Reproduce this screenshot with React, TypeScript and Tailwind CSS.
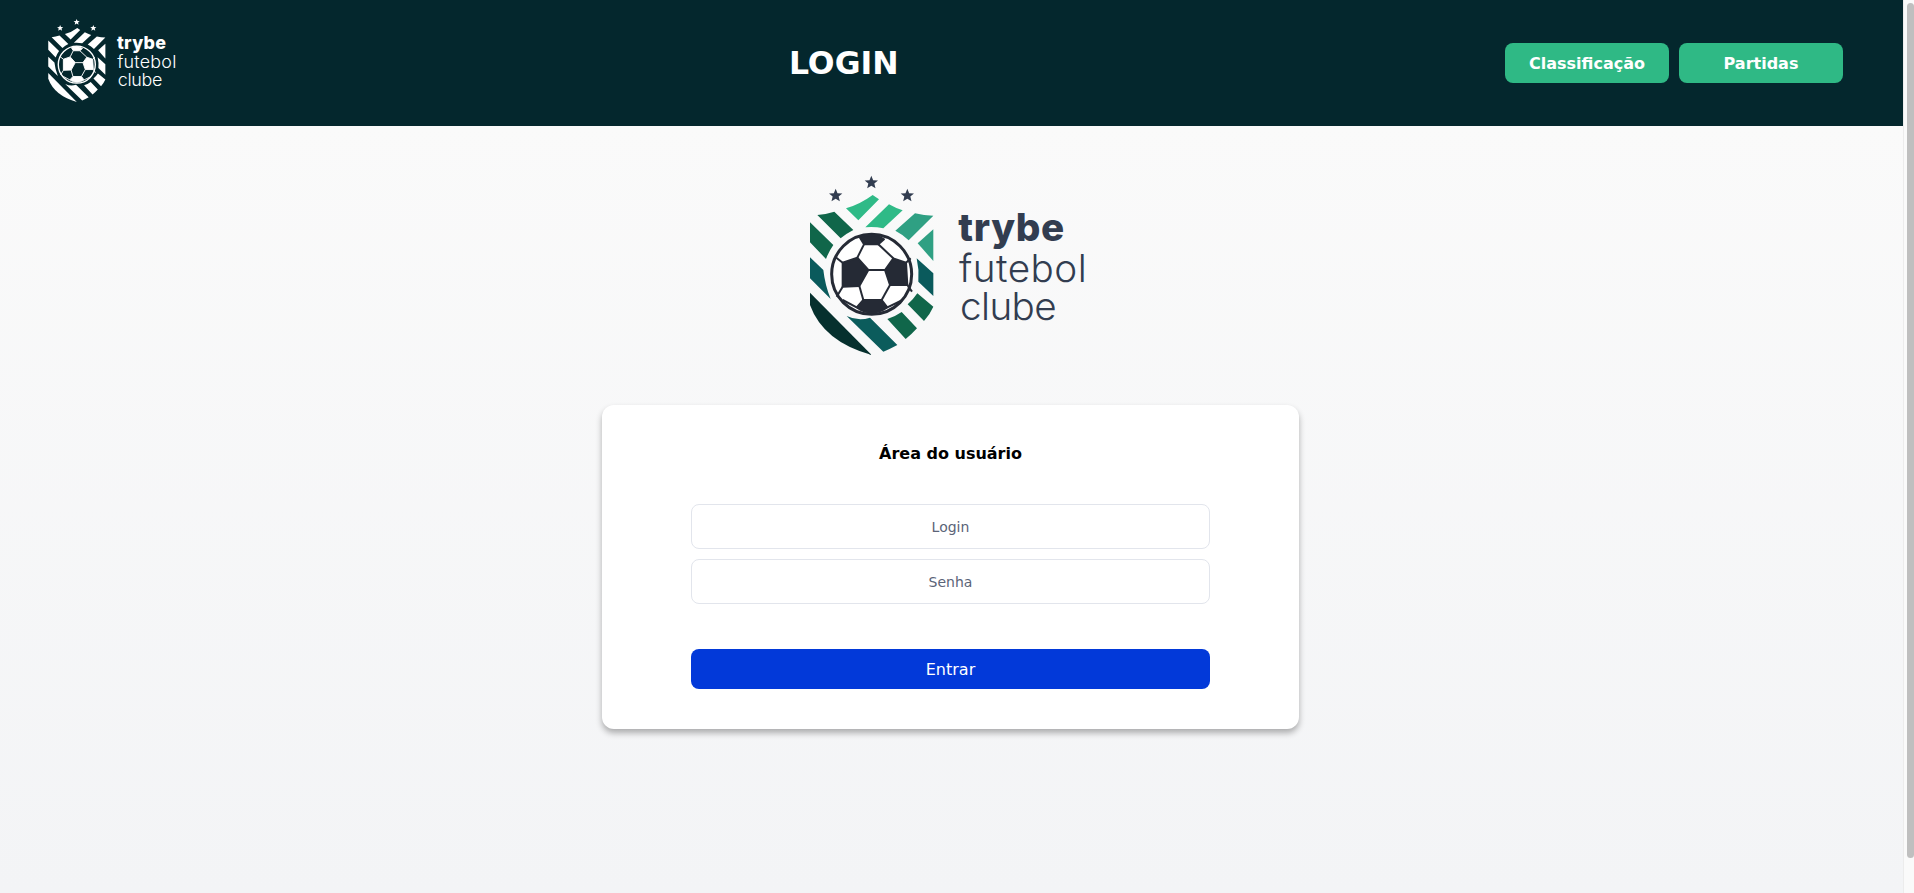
const pieces = [
  { d: "M168 130 Q210 118 248 90 L267 103 L205 166 Z", fill: "#2fba87" },
  { d: "M226 187 L297 118 Q318 130 338 136 L280 190 Q252 184 226 187 Z", fill: "#2fba87" },
  { d: "M316 197 L375 145 Q402 152 430 152 L356 226 Q338 208 316 197 Z", fill: "#2fa083" },
  { d: "M383 235 L430 193 L430 288 Z", fill: "#2fa083" },
  { d: "M82 150 Q108 148 133 140 L190 195 Q170 205 152 220 Z", fill: "#10664a" },
  { d: "M60 172 L130 240 Q116 260 108 282 L60 232 Z", fill: "#10664a" },
  { d: "M60 277 L100 315 Q105 360 122 402 L60 340 Z", fill: "#0a5a5c" },
  { d: "M380 280 L430 325 L430 393 L385 350 Q388 315 380 280 Z", fill: "#0a5a5c" },
  { d: "M60 383 L245 570 Q100 530 60 420 Z", fill: "#06302e" },
  { d: "M170 453 Q205 470 240 458 L322 540 Q300 552 280 560 Z", fill: "#0b5c5c" },
  { d: "M292 462 Q315 455 335 441 L381 490 Q365 508 347 522 Z", fill: "#10664a" },
  { d: "M353 418 Q370 403 382 385 L430 425 Q420 448 402 468 Z", fill: "#10664a" },
];

const panels = [
  "M210 218 Q245 200 282 223 L265 238 L222 238 Z",
  "M158 293 L202 278 L235 315 L208 363 L158 365 Z",
  "M285 315 L310 280 L348 293 L352 360 L300 360 Z",
  "M220 405 L275 405 L292 427 Q245 458 200 427 Z",
];

const seams = [
  "M222 238 L202 278",
  "M265 238 L310 280",
  "M235 315 L285 315",
  "M208 363 L220 405",
  "M300 360 L275 405",
  "M158 293 L136 276",
  "M348 293 L362 280",
  "M158 365 L140 395",
  "M352 360 L366 380",
  "M200 427 L158 405",
  "M292 427 L338 405",
];

const Star = ({ x, y, fill }: { x: number; y: number; fill: string }) => (
  <polygon
    transform={`translate(${x} ${y})`}
    points="0,-21 5.5,-7 20,-6.5 9,2.5 12.5,17 0,9 -12.5,17 -9,2.5 -20,-6.5 -5.5,-7"
    fill={fill}
  />
);

const Logo = ({ light, className }: { light?: boolean; className: string }) => {
  const ink = light ? "#ffffff" : "#323d50";
  const ball = light ? "#ffffff" : "#252a35";

  return (
    <svg viewBox="0 0 930 600" className={className}>
      <Star x={137} y={92} fill={ink} />
      <Star x={244} y={53} fill={ink} />
      <Star x={352} y={92} fill={ink} />
      {pieces.map((piece) => (
        <path key={piece.d} d={piece.d} fill={light ? "#ffffff" : piece.fill} />
      ))}
      <circle
        cx={245}
        cy={328}
        r={120}
        fill={light ? "none" : "#ffffff"}
        stroke={ball}
        strokeWidth={9}
      />
      {panels.map((d) => (
        <path key={d} d={d} fill={ball} stroke={ball} strokeWidth={6} strokeLinejoin="round" />
      ))}
      {seams.map((d) => (
        <path key={d} d={d} stroke={ball} strokeWidth={6} fill="none" />
      ))}
      <g fill={ink} className="font-['Inter',sans-serif]">
        <text x={505} y={228} fontSize={116} fontWeight={800} textLength={318}>
          trybe
        </text>
        <text x={507} y={352} fontSize={116} fontWeight={300} textLength={383}>
          futebol
        </text>
        <text x={510} y={465} fontSize={116} fontWeight={300} textLength={290}>
          clube
        </text>
      </g>
    </svg>
  );
};

const NavButton = ({ label }: { label: string }) => (
  <button className="w-[164px] h-10 pt-px rounded-lg bg-[#2fb985] text-white font-bold text-base">
    {label}
  </button>
);

const Field = ({ placeholder }: { placeholder: string }) => (
  <input
    placeholder={placeholder}
    className="w-full h-[45px] rounded-lg border border-[#e2e5ec] bg-white text-center text-sm text-[#5b6478] placeholder:text-[#5b6478] outline-none"
  />
);

export default function App() {
  return (
    <div className="flex h-[893px] overflow-hidden font-['DejaVu_Sans',sans-serif]">
      <div className="flex-1 min-w-0 flex flex-col bg-gradient-to-b from-[#fafafa] to-[#f3f4f6] from-[126px]">
        <header className="h-[126px] shrink-0 flex items-center justify-between pl-[39px] pr-[60px] bg-[#04272d]">
          <Logo light className="w-[143.5px] h-[92.6px] -mt-[6px]" />
          <h1 className="text-white font-bold text-[31.5px] pt-px">LOGIN</h1>
          <nav className="flex gap-2.5">
            <NavButton label="Classificação" />
            <NavButton label="Partidas" />
          </nav>
        </header>

        <main className="flex flex-col items-center pr-[2px]">
          <Logo className="w-[310px] h-[200px] mt-[39px] -ml-[12px]" />
          <section className="w-[697px] h-[324px] mt-10 rounded-xl bg-white shadow-[0_4px_6px_rgba(0,0,0,0.3)] flex flex-col items-center pt-[37px]">
            <h2 className="font-bold text-base text-black">Área do usuário</h2>
            <form className="w-[519px] mt-[38px] flex flex-col">
              <div className="flex flex-col gap-2.5">
                <Field placeholder="Login" />
                <Field placeholder="Senha" />
              </div>
              <button
                type="button"
                className="h-10 mt-[45px] pt-px rounded-lg bg-[#0239d9] text-white text-base"
              >
                Entrar
              </button>
            </form>
          </section>
        </main>
      </div>

      <div className="w-[11px] shrink-0 bg-[#fafafa] border-l border-[#ececec] pt-[3px] pl-[3px]">
        <div className="h-[855px] rounded-full bg-[#bfbfbf]" />
      </div>
    </div>
  );
}
